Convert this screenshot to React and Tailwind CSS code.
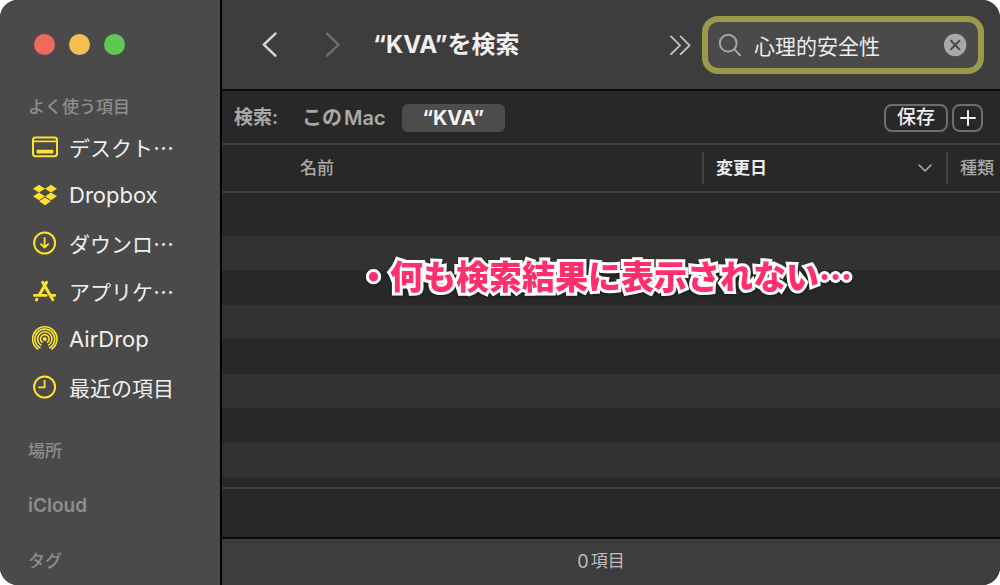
import { FaDropbox } from "react-icons/fa";

const iconClass = "h-[26px] w-[26px] shrink-0 text-[#fde22d]";

function DesktopIcon() {
  return (
    <svg viewBox="0 0 26 26" className={iconClass} fill="none" stroke="currentColor" aria-hidden="true">
      <rect x="1" y="3.6" width="24" height="18.6" rx="2.4" strokeWidth="2" />
      <path d="M1 7.4H25" strokeWidth="1.6" />
      <rect x="4.6" y="15.8" width="16.8" height="3.8" rx="0.8" fill="currentColor" stroke="none" />
    </svg>
  );
}

function DropboxIcon() {
  return <FaDropbox className={`${iconClass} p-px`} aria-hidden="true" />;
}

function DownloadIcon() {
  return (
    <svg viewBox="0 0 26 26" className={iconClass} fill="none" stroke="currentColor" strokeWidth="2" strokeLinecap="round" strokeLinejoin="round" aria-hidden="true">
      <circle cx="12.6" cy="13" r="10.5" />
      <path d="M12.6 8V17.6M9 14.1L12.6 17.7L16.2 14.1" strokeWidth="1.8" />
    </svg>
  );
}

function AppsIcon() {
  return (
    <svg viewBox="0 0 26 26" className={iconClass} fill="none" stroke="currentColor" strokeWidth="3" strokeLinecap="round" aria-hidden="true">
      <path d="M14.5 4.2L7.6 16.4" />
      <path d="M10.7 4.2L20.8 21.8" />
      <path d="M2.4 17.4H14.2M20 17.4H22.8" strokeWidth="2.8" />
      <path d="M4.9 21.2L4.5 21.9" />
    </svg>
  );
}

function AirDropIcon() {
  return (
    <svg viewBox="0 0 26 26" className={iconClass} fill="none" stroke="currentColor" strokeWidth="1.6" strokeLinecap="round" aria-hidden="true">
      <circle cx="12.8" cy="13" r="2" fill="currentColor" stroke="none" />
      <path d="M10 16.2A4.3 4.3 0 1 1 15.6 16.2" />
      <path d="M9 19.1A7.2 7.2 0 1 1 16.6 19.1" />
      <path d="M8 21.7A9.9 9.9 0 1 1 17.6 21.7" />
      <path d="M5.8 23A12.2 12.2 0 1 1 19.8 23" />
    </svg>
  );
}

function RecentsIcon() {
  return (
    <svg viewBox="0 0 26 26" className={iconClass} fill="none" stroke="currentColor" strokeWidth="2" strokeLinecap="round" strokeLinejoin="round" aria-hidden="true">
      <circle cx="12.6" cy="13" r="10.5" />
      <path d="M12.6 6.6V13.4H7" strokeWidth="1.8" />
    </svg>
  );
}

const favorites = [
  { label: "デスクト…", Icon: DesktopIcon },
  { label: "Dropbox", Icon: DropboxIcon },
  { label: "ダウンロ…", Icon: DownloadIcon },
  { label: "アプリケ…", Icon: AppsIcon },
  { label: "AirDrop", Icon: AirDropIcon },
  { label: "最近の項目", Icon: RecentsIcon },
];

function fontFor(label) {
  return /^[A-Z]/.test(label)
    ? "text-[22px] font-['Inter','Noto_Sans_CJK_JP',sans-serif]"
    : "text-[21px] font-['Noto_Sans_CJK_JP',sans-serif]";
}

function Sidebar() {
  return (
    <aside className="flex w-[222px] shrink-0 flex-col border-r-2 border-black bg-[#4a4a4a]">
      <div className="flex gap-[14px] pt-[34px] pl-[34px]">
        <button type="button" aria-label="閉じる" className="h-[21px] w-[21px] rounded-full bg-[#ed6a5f]" />
        <button type="button" aria-label="しまう" className="h-[21px] w-[21px] rounded-full bg-[#f5bf50]" />
        <button type="button" aria-label="拡大" className="h-[21px] w-[21px] rounded-full bg-[#62c655]" />
      </div>
      <h2 className="mt-10 pl-7 text-[17px] leading-6 font-medium text-[#8d8d8d]">よく使う項目</h2>
      <nav className="mt-1">
        <ul>
          {favorites.map(({ label, Icon }) => (
            <li key={label}>
              <a href="#" className="flex h-12 items-center gap-[11px] pl-8 text-[#f0f0f0]">
                <Icon />
                <span className={`leading-7 whitespace-nowrap ${fontFor(label)}`}>{label}</span>
              </a>
            </li>
          ))}
        </ul>
      </nav>
      <div className="mt-7 flex flex-col gap-[31px] pl-7 text-[17px] leading-6 font-medium text-[#8d8d8d]">
        <h2>場所</h2>
        <h2 className="text-[19px] leading-6 font-semibold">iCloud</h2>
        <h2>タグ</h2>
      </div>
    </aside>
  );
}

function Toolbar() {
  return (
    <header className="flex h-[91px] items-center border-b-2 border-[#0c0c0c] bg-[#3d3d3d] pr-4 pl-10">
      <button type="button" aria-label="戻る" className="text-[#d6d6d6]">
        <svg viewBox="0 0 16 26" className="h-[26px] w-4" fill="none" stroke="currentColor" strokeWidth="2.5" strokeLinecap="round" strokeLinejoin="round">
          <path d="M13.4 1.6L1.8 12.6L13.4 23.6" />
        </svg>
      </button>
      <button type="button" aria-label="進む" className="ml-12 text-[#6b6b6b]">
        <svg viewBox="0 0 16 26" className="h-[26px] w-4" fill="none" stroke="currentColor" strokeWidth="2.5" strokeLinecap="round" strokeLinejoin="round">
          <path d="M1 1.6L12.6 12.6L1 23.6" />
        </svg>
      </button>
      <h1 className="ml-[31px] flex-1 text-2xl font-bold whitespace-nowrap text-[#f0f0f0]">“KVA”を検索</h1>
      <button type="button" aria-label="さらに表示" className="text-[#bdbdbd]">
        <svg viewBox="0 0 22 20" className="h-5 w-[22px]" fill="none" stroke="currentColor" strokeWidth="1.9" strokeLinecap="round" strokeLinejoin="round">
          <path d="M2 1.4L11 10.4L2 19.2M11.6 1.4L20.6 10.4L11.6 19.2" />
        </svg>
      </button>
      <label className="ml-[11px] flex h-[58px] w-[282px] items-center rounded-2xl border-6 border-[#9b9a4a] bg-[#4a4a4a] px-[10px]">
        <svg viewBox="0 0 24 24" className="h-6 w-6 shrink-0 text-[#a6a6a6]" fill="none" stroke="currentColor" strokeWidth="2" strokeLinecap="round" aria-hidden="true">
          <circle cx="10.2" cy="10.2" r="8.4" />
          <path d="M16.4 16.4L22 22.2" />
        </svg>
        <input type="text" aria-label="検索" defaultValue="心理的安全性" className="ml-3 min-w-0 flex-1 bg-transparent pt-1 text-[21px] leading-7 text-[#ececec] outline-none" />
        <button type="button" aria-label="消去" className="shrink-0">
          <svg viewBox="0 0 24 24" className="h-6 w-6">
            <circle cx="11.2" cy="12" r="11.2" fill="#a9a9a9" />
            <path d="M7 7.8L15.4 16.2M15.4 7.8L7 16.2" stroke="#4a4a4a" strokeWidth="2" strokeLinecap="round" />
          </svg>
        </button>
      </label>
    </header>
  );
}

function ScopeBar() {
  return (
    <div className="flex h-[54px] items-center border-b-2 border-[#414141] bg-[#282828] pt-[2px] pr-[17px] pl-3 font-semibold text-[#a9a9a9]">
      <span className="text-[19px]">検索:</span>
      <button type="button" className="ml-6 flex gap-[2px] text-xl">
        <span>この</span>
        <span>Mac</span>
      </button>
      <button type="button" className="ml-4 h-7 w-[103px] rounded-md bg-[#4c4c4c] text-xl leading-7 font-bold text-[#f4f4f4]">“KVA”</button>
      <button type="button" className="ml-auto h-7 w-16 rounded-lg border-2 border-[#6e6e6e] text-[19px] leading-6 font-medium text-[#f0f0f0]">保存</button>
      <button type="button" aria-label="条件を追加" className="ml-1 flex h-7 w-[31px] items-center justify-center rounded-lg border-2 border-[#6e6e6e] text-[#f0f0f0]">
        <svg viewBox="0 0 16 16" className="h-4 w-4" stroke="currentColor" strokeWidth="2" strokeLinecap="round">
          <path d="M8 1V15M1 8H15" />
        </svg>
      </button>
    </div>
  );
}

function ResultsTable() {
  return (
    <table className="w-full table-fixed border-collapse text-left text-[17px] leading-6">
      <thead>
        <tr className="h-[47px] border-b-2 border-[#414141]">
          <th className="p-0 pl-[78px] font-medium text-[#a9a9a9]">名前</th>
          <th className="w-[244px] p-0">
            <div className="flex h-8 items-center justify-between border-l-2 border-[#414141] pr-[14px] pl-3">
              <span className="font-bold text-[#ececec]">変更日</span>
              <svg viewBox="0 0 14 8" className="h-2 w-[14px]" fill="none" stroke="#a9a9a9" strokeWidth="1.6" strokeLinecap="round" strokeLinejoin="round" aria-hidden="true">
                <path d="M1 1L7 7L13 1" />
              </svg>
            </div>
          </th>
          <th className="w-[54px] p-0">
            <div className="flex h-8 items-center border-l-2 border-[#414141] pl-3 font-medium whitespace-nowrap text-[#a9a9a9]">種類</div>
          </th>
        </tr>
      </thead>
      <tbody>
        <tr className="h-11"><td colSpan={3} className="p-0" /></tr>
        {[0, 1, 2].map((n) => [
          <tr key={`a${n}`} className="h-[34px] bg-[#323232]"><td colSpan={3} className="p-0" /></tr>,
          <tr key={`b${n}`} className="h-[35px]"><td colSpan={3} className="p-0" /></tr>,
        ])}
        <tr className="h-[34px] bg-[#323232]"><td colSpan={3} className="p-0" /></tr>
      </tbody>
    </table>
  );
}

export default function App() {
  return (
    <div className="min-h-screen bg-white font-['Inter','Noto_Sans_CJK_JP',sans-serif]" lang="ja">
      <div className="flex min-h-screen overflow-hidden rounded-[18px] bg-[#282828]">
        <Sidebar />
        <main className="flex min-w-0 flex-1 flex-col">
          <Toolbar />
          <ScopeBar />
          <section className="relative flex-1">
            <ResultsTable />
            <p className="absolute top-[105px] left-[135px] font-['Noto_Sans_CJK_JP',sans-serif] text-[33px] leading-[50px] font-black whitespace-nowrap text-[#ff2f6d] drop-shadow-[0_1px_1px_rgba(0,0,0,0.4)] [-webkit-text-stroke:6px_white] [paint-order:stroke_fill]">
              ・何も検索結果に表示されない…
            </p>
          </section>
          <div className="h-[50px] border-t-2 border-[#414141]" />
          <footer className="flex h-12 items-center justify-center gap-[2px] border-t-2 border-[#0c0c0c] bg-[#3d3d3d] pr-5 text-[17px] text-[#bdbdbd]">
            <span className="text-lg">0</span>
            <span>項目</span>
          </footer>
        </main>
      </div>
    </div>
  );
}
